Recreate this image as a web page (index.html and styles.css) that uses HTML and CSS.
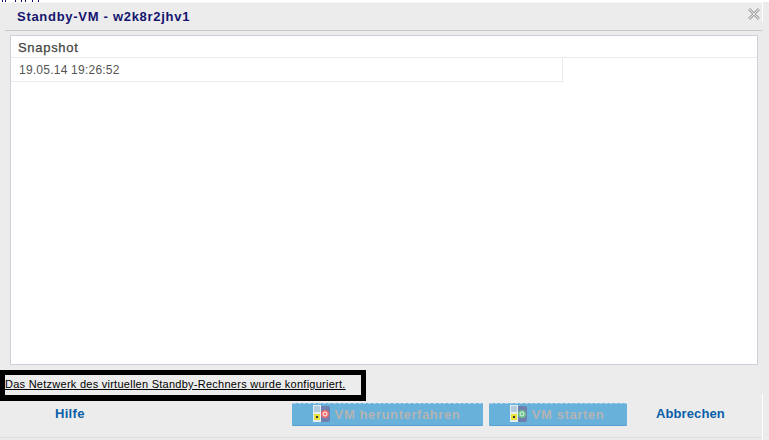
FILE: index.html
```
<!DOCTYPE html>
<html lang="de">
<head>
<meta charset="utf-8">
<title>Standby-VM</title>
<link rel="stylesheet" href="styles.css">
</head>
<body>
<svg class="clipped-line" width="60" height="2" viewBox="0 0 60 2" aria-hidden="true">
  <path d="M2.5 0v2M5.5 0v2M15.5 0v2M21.5 0v2M25.5 0v2M32.5 0v2M38.5 0v2" stroke="#14146e"/>
</svg>
<div class="dialog">
  <header class="titlebar">
    <h1 class="title">Standby-VM - w2k8r2jhv1</h1>
    <svg class="close" width="12" height="12" viewBox="0 0 12 12" aria-hidden="true">
      <path d="M1 1L11 11M11 1L1 11" stroke="#a8a8a8" stroke-width="3" fill="none"/>
      <path d="M1 1L11 11M11 1L1 11" stroke="#e8e8e8" stroke-width="1" fill="none"/>
    </svg>
  </header>
  <main class="panel">
    <div class="col-head">Snapshot</div>
    <div class="row">19.05.14 19:26:52</div>
  </main>
  <div class="notice"><a class="notice-link" href="#">Das Netzwerk des virtuellen Standby-Rechners wurde konfiguriert.</a></div>
  <footer class="actions">
    <a class="link help" href="#">Hilfe</a>
    <div class="buttons">
      <button class="btn btn-stop" disabled>
        <svg class="vm-icon" width="17" height="18" viewBox="0 0 17 18" aria-hidden="true">
          <rect x="3" y="1" width="14" height="16" rx="2" fill="#6f7fae"/>
          <rect x="0" y="0" width="8" height="17" fill="#e6edf2"/>
          <path d="M1 2h6M1 4h6M1 6h6" stroke="#7fa9c8"/>
          <rect x="1" y="9" width="6" height="6" fill="#e8e23a"/>
          <rect x="3" y="11" width="2" height="2" fill="#333"/>
          <circle cx="12" cy="9" r="4" fill="#ef6a6a"/>
          <circle cx="12" cy="9" r="2" fill="none" stroke="#fff"/>
        </svg>
        <span>VM herunterfahren</span>
      </button>
      <button class="btn btn-start" disabled>
        <svg class="vm-icon" width="17" height="18" viewBox="0 0 17 18" aria-hidden="true">
          <rect x="3" y="1" width="14" height="16" rx="2" fill="#6f7fae"/>
          <rect x="0" y="0" width="8" height="17" fill="#e6edf2"/>
          <path d="M1 2h6M1 4h6M1 6h6" stroke="#7fa9c8"/>
          <rect x="1" y="9" width="6" height="6" fill="#e8e23a"/>
          <rect x="3" y="11" width="2" height="2" fill="#333"/>
          <circle cx="12" cy="9" r="4" fill="#6cc48a"/>
          <circle cx="12" cy="9" r="2" fill="none" stroke="#e6f5ea"/>
        </svg>
        <span>VM starten</span>
      </button>
    </div>
    <a class="link cancel" href="#">Abbrechen</a>
  </footer>
</div>
</body>
</html>
```
FILE: styles.css
```
html, body { margin: 0; padding: 0; height: 100%; }
body {
  background:
    linear-gradient(#fff, #fff) 0 0 / 100% 2px no-repeat,
    linear-gradient(#fff, #fff) 762px 0 / 1px 22px no-repeat,
    linear-gradient(#fff, #fff) 762px 394px / 1px 46px no-repeat,
    #ebebeb;
  overflow: hidden;
  font-family: "Liberation Sans", Arial, sans-serif;
}
.clipped-line { display: block; }
.dialog {
  box-sizing: border-box;
  width: 762px;
  height: 436px;
  background: #ececec;
  border-top: 1px solid #f6f6f6;
  border-bottom: 1px solid #e0e0e0;
  display: flex;
  flex-direction: column;
}
.titlebar {
  height: 27px;
  flex: none;
  border-bottom: 1px solid #c8c8c8;
  margin-left: 5px;
  display: flex;
  align-items: center;
  justify-content: space-between;
  padding: 0 2px 0 12px;
}
.title {
  margin: 0;
  font-size: 13px;
  font-weight: bold;
  letter-spacing: 0.71px;
  color: #14146e;
}
.close { margin-top: -5px; }
.panel {
  box-sizing: border-box;
  flex: none;
  height: 330px;
  margin: 4px 4px 0 10px;
  background: #fff;
  border: 1px solid #ccd0da;
}
.col-head {
  box-sizing: border-box;
  height: 22px;
  padding: 4px 0 0 7px;
  font-size: 13px;
  line-height: 15px;
  letter-spacing: 0.7px;
  -webkit-text-stroke: 0.25px #444;
  color: #444;
  border-bottom: 1px solid #eaeaea;
}
.row {
  box-sizing: border-box;
  width: 552px;
  height: 24px;
  padding: 5px 0 0 8px;
  font-size: 12px;
  line-height: 15px;
  letter-spacing: 0.23px;
  color: #555;
  border-right: 1px solid #eaeaea;
  border-bottom: 1px solid #eaeaea;
}
.notice {
  box-sizing: border-box;
  flex: none;
  width: 366px;
  height: 31px;
  margin-top: 5px;
  border: 5px solid #000;
  border-bottom-width: 6px;
  padding: 2px 0 0 0;
  font-size: 11px;
  line-height: 14px;
  letter-spacing: 0.26px;
  white-space: nowrap;
}
.notice-link { color: #000; }
.actions {
  flex: 1;
  display: flex;
  align-items: flex-start;
  padding-top: 2px;
}
.link {
  font-size: 13px;
  font-weight: bold;
  letter-spacing: 0.1px;
  color: #0a5fa8;
  text-decoration: none;
  line-height: 22px;
}
.help { margin-left: 55px; width: 237px; letter-spacing: 0.3px; }
.buttons { display: flex; gap: 6px; }
.btn {
  box-sizing: border-box;
  height: 23px;
  border: 0;
  border-top: 1px dashed #a8d0ea;
  border-bottom: 1px solid #5b9ed6;
  border-radius: 1px;
  background: #67b1db;
  color: #b4b4b4;
  font-family: "Liberation Sans", Arial, sans-serif;
  font-size: 13px;
  font-weight: bold;
  letter-spacing: 0.6px;
  display: flex;
  align-items: center;
  justify-content: center;
  gap: 5px;
  padding: 0 2px 1px 0;
}
.btn-stop { width: 191px; }
.btn-start { width: 138px; }
.cancel { margin-left: 29px; }
```
